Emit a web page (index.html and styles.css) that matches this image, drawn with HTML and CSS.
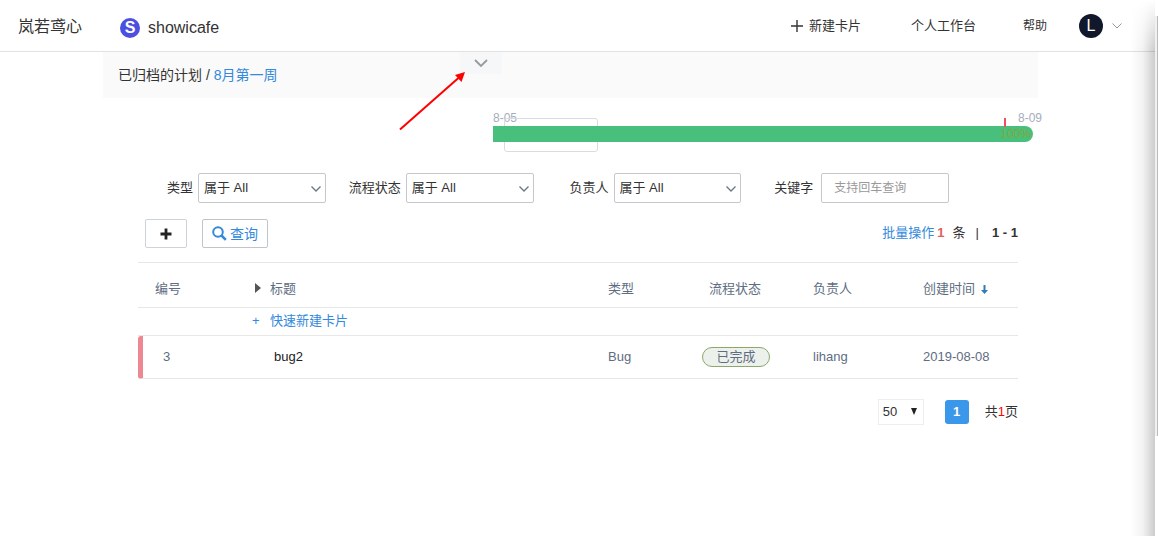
FILE: index.html
```html
<!DOCTYPE html>
<html lang="zh-CN">
<head>
  <meta charset="UTF-8">
  <meta name="viewport" content="width=device-width, initial-scale=1.0">
  <title>showicafe</title>
  <link rel="stylesheet" href="styles.css">
</head>
<body>

  <header class="topbar">
    <a class="team" href="#">岚若鸢心</a>
    <a class="project" href="#">
      <span class="project-logo">S</span>
      showicafe
    </a>
    <nav class="topnav">
      <a class="nav-new" href="#">
        <svg width="12" height="12" viewBox="0 0 12 12"><path d="M6 0v12M0 6h12" stroke="#333" stroke-width="1.4"/></svg>
        新建卡片
      </a>
      <a class="nav-desk" href="#">个人工作台</a>
      <a class="nav-help" href="#">帮助</a>
      <button class="user" type="button">
        <span class="avatar">L</span>
        <svg width="10" height="6" viewBox="0 0 10 6"><path d="M.5.5L5 5 9.5.5" fill="none" stroke="#999"/></svg>
      </button>
    </nav>
  </header>

  <main class="page">
    <!-- Breadcrumb -->
    <div class="crumbs">
      <span>已归档的计划 / <a href="#">8月第一周</a></span>
      <button class="fold" type="button" aria-label="展开">
        <svg width="14" height="8" viewBox="0 0 14 8"><path d="M1 1l6 6 6-6" fill="none" stroke="#999" stroke-width="1.8"/></svg>
      </button>
      <svg class="pointer" width="68" height="60" viewBox="0 0 68 60"><path d="M1 58.500L60 6.500" stroke="#f00" stroke-width="2"/><path d="M66 1L56 4 62.500 11z" fill="#f00"/></svg>
    </div>

    <!-- Plan progress -->
    <div class="timeline">
      <div class="dates"><span>8-05</span><span>8-09</span></div>
      <div class="range"></div>
      <div class="bar"><span>100%</span></div>
      <div class="today"></div>
    </div>

    <!-- Filters -->
    <form class="filters">
      <div class="field">
        <label for="type">类型</label>
        <div class="select">
          <select id="type"><option>属于 All</option></select>
          <svg width="10" height="6" viewBox="0 0 10 6"><path d="M.5.5L5 5 9.5.5" fill="none" stroke="#667685" stroke-width="1.3"/></svg>
        </div>
      </div>
      <div class="field">
        <label for="status">流程状态</label>
        <div class="select">
          <select id="status"><option>属于 All</option></select>
          <svg width="10" height="6" viewBox="0 0 10 6"><path d="M.5.5L5 5 9.5.5" fill="none" stroke="#667685" stroke-width="1.3"/></svg>
        </div>
      </div>
      <div class="field">
        <label for="owner">负责人</label>
        <div class="select">
          <select id="owner"><option>属于 All</option></select>
          <svg width="10" height="6" viewBox="0 0 10 6"><path d="M.5.5L5 5 9.5.5" fill="none" stroke="#667685" stroke-width="1.3"/></svg>
        </div>
      </div>
      <div class="field">
        <label class="wide" for="keyword">关键字</label>
        <input id="keyword" type="text" placeholder="支持回车查询">
      </div>
    </form>

    <div class="tools">
      <button class="btn btn-add" type="button" aria-label="新建">
        <svg width="12" height="12" viewBox="0 0 12 12"><path d="M6 .5v11M.5 6h11" stroke="#222" stroke-width="2.8"/></svg>
      </button>
      <button class="btn btn-query" type="button">
        <svg width="15" height="15" viewBox="0 0 15 15"><circle cx="6" cy="6" r="4.8" fill="none" stroke="#3389dc" stroke-width="2"/><path d="M9.5 9.5l4.300 4.300" stroke="#3389dc" stroke-width="2.5"/></svg>
        查询
      </button>
      <div class="summary">
        <a href="#">批量操作</a>
        <b class="count">1</b>
        <span class="unit">条</span>
        <span class="split">|</span>
        <b>1 - 1</b>
      </div>
    </div>

    <!-- Cards -->
    <table class="cards">
      <colgroup>
        <col class="col-no"><col><col class="col-type"><col class="col-status"><col class="col-owner"><col class="col-date">
      </colgroup>
      <thead>
        <tr>
          <th class="no">编号</th>
          <th class="title"><svg class="caret" width="6" height="10" viewBox="0 0 6 10"><path d="M0 0l6 5-6 5z" fill="#555"/></svg>标题</th>
          <th>类型</th>
          <th class="status">流程状态</th>
          <th>负责人</th>
          <th>创建时间 <svg class="sort" width="7" height="9" viewBox="0 0 7 9"><path d="M2.500 0h2v5H7L3.500 9 0 5h2.500z" fill="#337ab7"/></svg></th>
        </tr>
      </thead>
      <tbody>
        <tr class="quick">
          <td></td>
          <td colspan="5" class="title"><a href="#"><span class="plus">+</span>快速新建卡片</a></td>
        </tr>
        <tr class="card">
          <td class="no">3</td>
          <td class="title"><a href="#">bug2</a></td>
          <td>Bug</td>
          <td><span class="tag">已完成</span></td>
          <td>lihang</td>
          <td>2019-08-08</td>
        </tr>
      </tbody>
    </table>

    <div class="pager">
      <div class="size">
        <select aria-label="每页条数"><option>50</option></select>
        <svg width="6" height="7" viewBox="0 0 6 7"><path d="M0 0h6L3 7z" fill="#222"/></svg>
      </div>
      <button class="current" type="button">1</button>
      <span>共<em>1</em>页</span>
    </div>
  </main>

  <div class="edge"></div>
  <div class="thumb"></div>

</body>
</html>
```

FILE: styles.css
```css
* {
  box-sizing: border-box;
}

body {
  margin: 0;
  background: #fff;
  color: #333;
  font-family: "Liberation Sans", "Noto Sans CJK SC", sans-serif;
  font-size: 13px;
  line-height: 20px;
}

a {
  color: #3389dc;
  text-decoration: none;
}

button,
input,
select {
  margin: 0;
  font: inherit;
  color: inherit;
}

svg {
  flex: none;
}

/* top bar */
.topbar {
  display: flex;
  align-items: center;
  height: 52px;
  padding: 0 36px 0 18px;
  border-bottom: 1px solid #e2e2e2;
}

.topbar a {
  color: #333;
}

.topbar .team {
  margin-right: 38px;
  padding-top: 3px;
  font-size: 16px;
}

.topbar .project {
  display: flex;
  align-items: center;
  gap: 8px;
  padding-top: 4px;
  font-size: 16px;
}

.project-logo {
  width: 20px;
  height: 20px;
  border-radius: 50%;
  background: #4c50e0;
  color: #fff;
  font-weight: bold;
  line-height: 19px;
  text-align: center;
}

.topnav {
  display: flex;
  align-items: center;
  margin-left: auto;
}

.nav-new {
  display: flex;
  align-items: center;
  gap: 6px;
  margin-right: 50px;
}

.nav-desk {
  margin-right: 47px;
}

.nav-help {
  margin-right: 32px;
  font-size: 12px;
}

.user {
  display: flex;
  align-items: center;
  gap: 9px;
  padding: 0;
  border: 0;
  background: none;
}

.avatar {
  width: 24px;
  height: 24px;
  border-radius: 50%;
  background: #12182b;
  color: #fff;
  font-size: 16px;
  line-height: 24px;
}

.page {
  margin: 0 120px 0 103px;
}

/* breadcrumb */
.crumbs {
  position: relative;
  padding: 13px 15px;
  background: #fafafa;
  font-size: 14px;
}

.fold {
  position: absolute;
  top: 0;
  left: 357px;
  display: flex;
  align-items: center;
  justify-content: center;
  width: 42px;
  height: 22px;
  padding: 0;
  border: 0;
  background: #f5f7f9;
}

.pointer {
  position: absolute;
  top: 19px;
  left: 296px;
}

/* progress */
.timeline {
  position: relative;
  margin: 12px 5px 0 390px;
  height: 42px;
  color: #a5adba;
  font-size: 12px;
  line-height: 16px;
}

.dates {
  display: flex;
  justify-content: space-between;
  height: 16px;
  margin-right: -9px;
}

.range {
  position: absolute;
  top: 8px;
  left: 11px;
  width: 94px;
  height: 34px;
  border: 1px solid #d9dce0;
  border-radius: 3px;
}

.bar {
  position: relative;
  height: 16px;
  padding-right: 2px;
  border-radius: 0 8px 8px 0;
  background: #48bf7d;
  color: #82a83a;
  text-align: right;
}

.today {
  position: absolute;
  top: 8px;
  right: 27px;
  width: 2px;
  height: 9px;
  background: #f04f5f;
}

/* filters */
.filters {
  display: grid;
  grid-template-columns: repeat(4, 1fr);
  margin: 21px 89px 0 15px;
}

.field {
  display: flex;
  align-items: center;
}

.field label {
  flex: none;
  width: 80px;
  padding-right: 5px;
  text-align: right;
}

.field .wide {
  padding-right: 8px;
}

.select {
  position: relative;
  flex: 1;
}

.select select,
.field input {
  display: block;
  width: 100%;
  min-width: 0;
  height: 30px;
  padding: 0 5px;
  border: 1px solid #c4c8cc;
  border-radius: 2px;
  background: #fff;
  appearance: none;
}

.field input {
  padding: 0 12px;
  font-size: 12px;
}

.field input::placeholder {
  color: #999;
}

.select svg {
  position: absolute;
  top: 13px;
  right: 5px;
  pointer-events: none;
}

/* buttons row */
.tools {
  display: flex;
  align-items: center;
  margin: 16px 20px 14px 42px;
}

.btn {
  display: flex;
  align-items: center;
  justify-content: center;
  gap: 3px;
  height: 29px;
  padding: 0;
  border: 1px solid #ccd3d9;
  border-radius: 2px;
  background: #fff;
}

.btn-add {
  width: 42px;
  margin-right: 15px;
}

.btn-query {
  width: 66px;
  border-color: #c0c5ca;
  color: #3389dc;
  font-size: 14px;
}

.summary {
  display: flex;
  margin-left: auto;
  padding-bottom: 2px;
}

.count {
  margin: 0 8px 0 3px;
  color: #e0605f;
}

.unit {
  margin-right: 10px;
}

.split {
  margin-right: 13px;
}

/* table */
.cards {
  width: calc(100% - 55px);
  margin-left: 35px;
  border-top: 1px solid #e7e7e7;
  border-spacing: 0;
  table-layout: fixed;
  color: #5e6d82;
}

.cards th,
.cards td {
  padding: 0;
  border-bottom: 1px solid #e7e7e7;
  font-weight: normal;
  text-align: left;
}

.cards th {
  height: 45px;
  padding-top: 8px;
}

.col-no {
  width: 114px;
}

.col-type {
  width: 94px;
}

.col-status {
  width: 111px;
}

.col-owner {
  width: 110px;
}

.col-date {
  width: 95px;
}

.cards th.no {
  padding-left: 17px;
}

.cards th.title,
.quick .title {
  padding-left: 18px;
}

.cards th.status {
  padding-left: 7px;
}

.caret {
  margin: 0 9px 0 -15px;
}

.sort {
  margin-left: 2px;
  vertical-align: -1px;
}

.quick td {
  height: 28px;
  padding-bottom: 2px;
}

.plus {
  display: inline-block;
  width: 18px;
  margin-left: -18px;
}

.card td {
  height: 43px;
}

.card .no {
  padding-left: 20px;
  border-left: 5px solid #ed8791;
  border-radius: 3px 0 0 3px;
}

.card .title {
  padding-left: 22px;
}

.card .title a {
  color: #222;
}

.tag {
  display: block;
  width: 68px;
  height: 20px;
  border: 1px solid #8da66c;
  border-radius: 10px;
  background: #edf1ec;
  line-height: 18px;
  text-align: center;
}

/* pager */
.pager {
  display: flex;
  align-items: center;
  justify-content: flex-end;
  margin: 20px 20px 0 0;
}

.size {
  position: relative;
  width: 46px;
  margin-right: 21px;
}

.size select {
  display: block;
  width: 100%;
  height: 26px;
  padding: 0 4px;
  border: 1px solid #eee;
  background: #fff;
  appearance: none;
}

.size svg {
  position: absolute;
  top: 9px;
  right: 7px;
  pointer-events: none;
}

.current {
  width: 24px;
  height: 24px;
  margin-right: 16px;
  padding: 0;
  border: 0;
  border-radius: 3px;
  background: #3a97ea;
  color: #fff;
  font-weight: bold;
}

.pager em {
  color: #f00;
  font-style: normal;
}

/* window edge */
.edge {
  position: fixed;
  top: 0;
  right: 3px;
  bottom: 0;
  width: 24px;
  background: linear-gradient(to right, rgba(0, 0, 0, 0), rgba(0, 0, 0, 0.05) 50%, rgba(0, 0, 0, 0.2));
  -webkit-mask-image: linear-gradient(transparent, #000 50px);
  mask-image: linear-gradient(transparent, #000 50px);
  pointer-events: none;
}

.thumb {
  position: fixed;
  top: 16px;
  right: 0;
  width: 1px;
  height: 420px;
  background: #bbb;
  box-shadow: -1px 0 #f1f1f1, -2px 0 #f1f1f1;
}
```
